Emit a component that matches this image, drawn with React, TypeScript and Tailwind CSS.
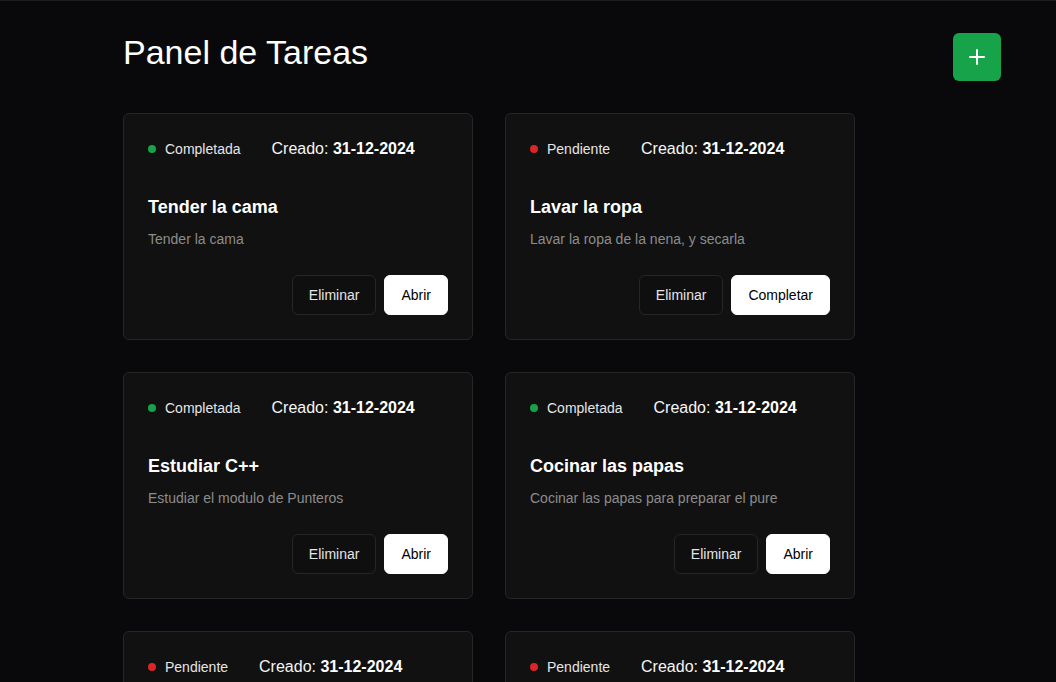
import React from "react";
import { Plus } from "lucide-react";

type Task = {
  title: string;
  desc: string;
  done: boolean;
  date: string;
};

const tasks: Task[] = [
  { title: "Tender la cama", desc: "Tender la cama", done: true, date: "31-12-2024" },
  { title: "Lavar la ropa", desc: "Lavar la ropa de la nena, y secarla", done: false, date: "31-12-2024" },
  { title: "Estudiar C++", desc: "Estudiar el modulo de Punteros", done: true, date: "31-12-2024" },
  { title: "Cocinar las papas", desc: "Cocinar las papas para preparar el pure", done: true, date: "31-12-2024" },
  { title: "Barrer el patio", desc: "Barrer las hojas del patio", done: false, date: "31-12-2024" },
  { title: "Pagar la luz", desc: "Pagar la factura de la luz", done: false, date: "31-12-2024" },
];

function TaskCard({ task }: { task: Task }) {
  return (
    <div className="w-[350px] rounded-md border border-[#262626] bg-[#111111] p-6">
      {/* status + fecha */}
      <div className="flex h-[21px] items-center gap-[31px]">
        <div className="flex items-center gap-[9px]">
          <span
            className={
              task.done
                ? "h-2 w-2 rounded-full bg-[#16a34a]"
                : "h-2 w-2 rounded-full bg-[#dc2626]"
            }
          />
          <span className="text-sm text-[#e5e5e5]">
            {task.done ? "Completada" : "Pendiente"}
          </span>
        </div>
        <div className="text-base text-[#f5f5f5]">
          Creado: <span className="font-bold text-white">{task.date}</span>
        </div>
      </div>

      <h3 className="mt-[34px] text-lg font-bold leading-7 text-white">{task.title}</h3>
      <p className="mt-2 text-sm leading-5 text-[#8c8c8c]">{task.desc}</p>

      <div className="mt-[26px] flex justify-end gap-2">
        <button className="h-10 rounded-md border border-[#262626] bg-[#0f0f0f] px-4 text-sm text-[#e5e5e5]">
          Eliminar
        </button>
        <button className="h-10 rounded-md border border-white bg-white px-4 text-sm text-black">
          {task.done ? "Abrir" : "Completar"}
        </button>
      </div>
    </div>
  );
}

export default function App() {
  return (
    <div
      className="min-h-screen border-t border-[#1c1c1c] bg-[#09090b] pl-[123px] pr-[55px] pt-[32px] pb-10"
      style={{ fontFamily: '"Liberation Sans", Arial, sans-serif' }}
    >
      <div className="flex items-start justify-between">
        <h1 className="-mt-px text-[34px] leading-10 text-white">Panel de Tareas</h1>
        <button className="flex h-12 w-12 items-center justify-center rounded-md bg-[#16a34a] text-white">
          <Plus className="h-6 w-6" strokeWidth={2} />
        </button>
      </div>

      <div className="mt-8 grid grid-cols-[350px_350px] gap-8">
        {tasks.map((t) => (
          <TaskCard key={t.title} task={t} />
        ))}
      </div>
    </div>
  );
}
